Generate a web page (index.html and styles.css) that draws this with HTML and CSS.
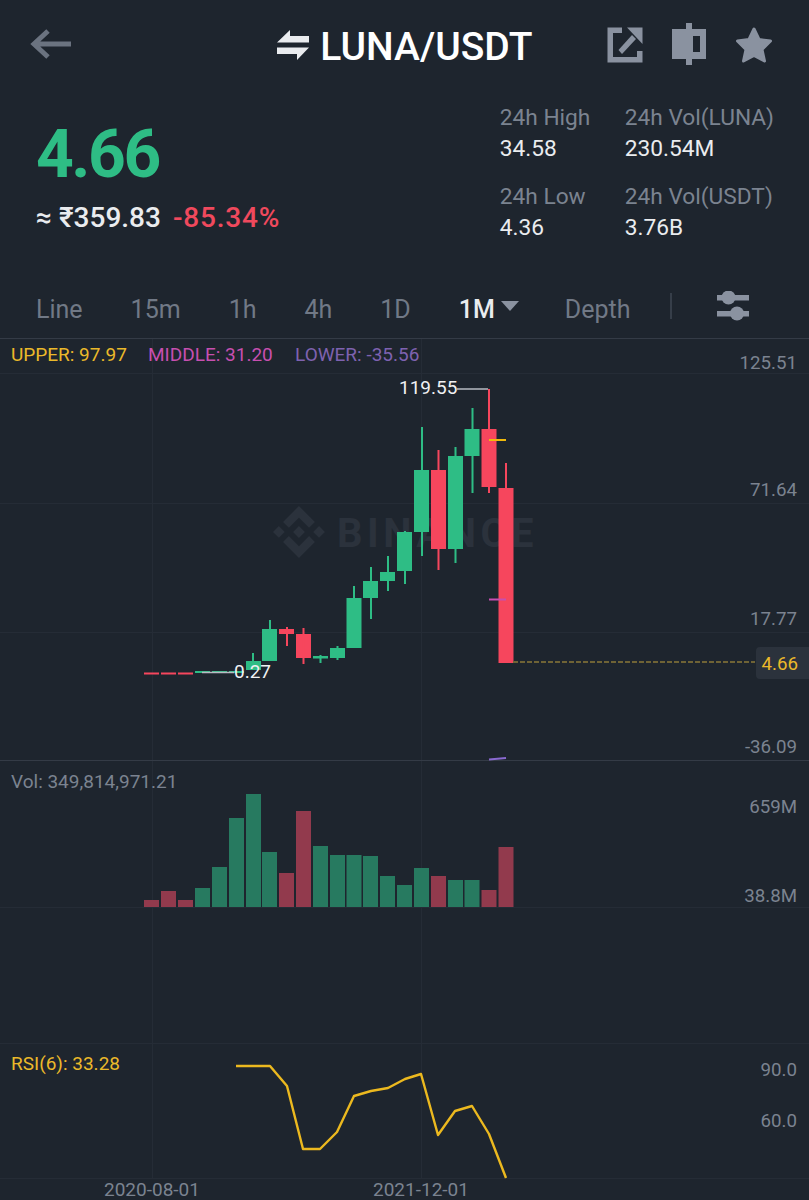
FILE: index.html
```html
<!DOCTYPE html>
<html lang="en">
<head>
  <meta charset="UTF-8">
  <meta name="viewport" content="width=device-width, initial-scale=1.0">
  <title>LUNA/USDT</title>
  <link rel="stylesheet" href="styles.css">
</head>
<body>
  <header class="topbar">
    <svg class="back-icon" viewBox="0 0 46 34" aria-hidden="true">
      <path d="M18 4 L4 17 L18 30 M4 17 H41"/>
    </svg>
    <div class="title">
      <svg class="swap-icon" viewBox="0 0 34 32" aria-hidden="true">
        <path d="M1 13.500 L14 1 V7 H33 V13.500 Z M1 18.500 H33 L21 31 V25 H1 Z"/>
      </svg>
      <span>LUNA/USDT</span>
    </div>
    <div class="actions">
      <svg viewBox="0 0 36 36" width="36" height="36" aria-hidden="true">
        <path d="M0.500 0.500 H15 V6 H6 V30 H30 V24 H35.500 V35.500 H0.500 Z"/>
        <path d="M20 0.500 H35.500 V17 Z"/>
        <path d="M11.500 23 L25 8 L29 12 L15 27 Z"/>
      </svg>
      <svg viewBox="0 0 36 44" width="36" height="44" aria-hidden="true">
        <path fill-rule="evenodd" d="M15 0 H21 V6 H35 V36 H21 V42 H15 V36 H1 V6 H15 Z M22 13 V29 H29 V13 Z"/>
      </svg>
      <svg viewBox="0 0 38 38" width="38" height="38" aria-hidden="true">
        <path class="star" d="M19 3 L24 13.500 L35.500 15 L27 23.500 L29.500 35 L19 29.500 L8.500 35 L11 23.500 L2.500 15 L14 13.500 Z"/>
      </svg>
    </div>
  </header>

  <section class="summary">
    <div class="price-block">
      <div class="last-price">4.66</div>
      <div class="price-sub">
        <span>≈ ₹359.83</span>
        <span class="change">-85.34%</span>
      </div>
    </div>
    <div class="stats">
      <div class="stat"><span>24h High</span><strong>34.58</strong></div>
      <div class="stat"><span>24h Vol(LUNA)</span><strong>230.54M</strong></div>
      <div class="stat"><span>24h Low</span><strong>4.36</strong></div>
      <div class="stat"><span>24h Vol(USDT)</span><strong>3.76B</strong></div>
    </div>
  </section>

  <nav class="tabs">
    <a>Line</a>
    <a>15m</a>
    <a>1h</a>
    <a>4h</a>
    <a>1D</a>
    <a class="active">1M<i class="caret"></i></a>
    <a class="depth">Depth</a>
    <span class="tab-sep"></span>
    <svg class="sliders" viewBox="0 0 34 30" aria-hidden="true">
      <path d="M0 4 H32 V9.500 H0 Z M0 20 H32 V25.500 H0 Z"/>
      <circle cx="11.500" cy="6.500" r="7"/>
      <circle cx="20" cy="22.500" r="7"/>
    </svg>
  </nav>

  <svg class="chart" viewBox="0 338 809 862" width="809" height="862" aria-label="Candlestick chart">
    <!-- grid -->
    <path class="grid" d="M0 373.500 H809 M0 503.500 H809 M0 632.500 H809 M0 907.500 H809 M0 1043.500 H809 M0 1178.500 H809 M152.500 338 V1178 M421.500 338 V1178"/>
    <path class="divider" d="M0 338.500 H809 M0 760.500 H809"/>

    <!-- watermark -->
    <g class="watermark" transform="translate(273 506) scale(0.41)">
      <path d="M38.73 53.2l24.59-24.58 24.6 24.6 14.3-14.31L63.32 0 24.43 38.9l14.3 14.3z"/>
      <path d="M0 63.31l14.3-14.31 14.31 14.31-14.31 14.3z"/>
      <path d="M38.73 73.41l24.59 24.59 24.6-24.6 14.31 14.29-38.9 38.91-38.91-38.88v-.03l14.31-14.29z"/>
      <path d="M98 63.31l14.3-14.31 14.31 14.3-14.31 14.32z"/>
      <path d="M77.83 63.3L63.32 48.78 52.59 59.51l-1.24 1.23-2.54 2.54 14.51 14.5 14.51-14.51z"/>
    </g>
    <text class="watermark-text" x="337" y="547">BINANCE</text>

    <!-- candles -->
    <g class="down">
      <rect x="144" y="672.500" width="15" height="2"/>
      <rect x="161" y="672.500" width="15" height="2"/>
      <rect x="178" y="672.500" width="15" height="2"/>
      <rect x="279" y="629" width="15" height="5"/><rect x="286" y="627" width="2" height="19"/>
      <rect x="296" y="634" width="15" height="24"/><rect x="302.500" y="628" width="2" height="36"/>
      <rect x="431" y="470" width="15" height="79"/><rect x="437.500" y="450" width="2" height="120"/>
      <rect x="481.500" y="429" width="15" height="58"/><rect x="488" y="389" width="2" height="104"/>
      <rect x="498.500" y="488" width="15" height="175"/><rect x="505" y="463" width="2" height="26"/>
    </g>
    <g class="up">
      <rect x="195" y="671" width="15" height="2"/>
      <rect x="212" y="671" width="15" height="2"/>
      <rect x="229" y="671" width="15" height="2"/>
      <rect x="246" y="661" width="15" height="9"/><rect x="252" y="653" width="2" height="9"/>
      <rect x="262" y="629" width="15" height="32"/><rect x="269" y="620" width="2" height="10"/>
      <rect x="313" y="656" width="15" height="2.500"/><rect x="319.500" y="655" width="2" height="8"/>
      <rect x="330" y="648" width="15" height="10"/><rect x="336.500" y="646" width="2" height="14"/>
      <rect x="346.500" y="598" width="15" height="50"/><rect x="353" y="586" width="2" height="13"/>
      <rect x="363" y="581" width="15" height="17"/><rect x="370" y="567" width="2" height="52"/>
      <rect x="380" y="572" width="15" height="9"/><rect x="387" y="556" width="2" height="35"/>
      <rect x="397" y="532" width="15" height="39"/><rect x="404" y="531" width="2" height="53"/>
      <rect x="414" y="470" width="15" height="62"/><rect x="421" y="427" width="2" height="129"/>
      <rect x="448" y="456" width="15" height="93"/><rect x="454.500" y="447" width="2" height="116"/>
      <rect x="464.500" y="429" width="15" height="27"/><rect x="471.500" y="408" width="2" height="85"/>
    </g>

    <!-- band markers and price line -->
    <path class="tick-upper" d="M489 440 H506"/>
    <path class="tick-middle" d="M489 599.500 H506"/>
    <path class="tick-lower" d="M489 759.500 L506 758"/>
    <path class="price-line" d="M513 662 H755"/>
    <path class="leader" d="M457 389 H488 M202 672.500 H234"/>
    <rect class="price-tag" x="756" y="647" width="60" height="32" rx="4"/>

    <!-- volume -->
    <g class="vol-down">
      <rect x="144" y="900" width="15" height="7"/>
      <rect x="161" y="891" width="15" height="16"/>
      <rect x="178" y="900" width="15" height="7"/>
      <rect x="279" y="873" width="15" height="34"/>
      <rect x="296" y="811" width="15" height="96"/>
      <rect x="431" y="876" width="15" height="31"/>
      <rect x="481.500" y="890" width="15" height="17"/>
      <rect x="498.500" y="847" width="15" height="60"/>
    </g>
    <g class="vol-up">
      <rect x="195" y="888" width="15" height="19"/>
      <rect x="212" y="867" width="15" height="40"/>
      <rect x="229" y="818" width="15" height="89"/>
      <rect x="246" y="794" width="15" height="113"/>
      <rect x="262" y="852" width="15" height="55"/>
      <rect x="313" y="846" width="15" height="61"/>
      <rect x="330" y="855" width="15" height="52"/>
      <rect x="346.500" y="855" width="15" height="52"/>
      <rect x="363" y="856" width="15" height="51"/>
      <rect x="380" y="876" width="15" height="31"/>
      <rect x="397" y="885" width="15" height="22"/>
      <rect x="414" y="868" width="15" height="39"/>
      <rect x="448" y="880" width="15" height="27"/>
      <rect x="464.500" y="880" width="15" height="27"/>
    </g>

    <!-- rsi -->
    <polyline class="rsi" points="236,1066 270,1066 287,1086 303,1149 320,1149 337,1132 354,1096 371,1091 388,1088 405,1079 421,1074 438,1135 455,1111 472,1106 489,1134 506,1178"/>

    <!-- legends -->
    <text class="label upper" x="11" y="361">UPPER: 97.97</text>
    <text class="label middle" x="148" y="361">MIDDLE: 31.20</text>
    <text class="label lower" x="295" y="361">LOWER: -35.56</text>
    <text class="label muted" x="11" y="788">Vol: 349,814,971.21</text>
    <text class="label upper" x="11" y="1070">RSI(6): 33.28</text>
    <text class="label light" x="399" y="394">119.55</text>
    <text class="label light" x="234" y="678">0.27</text>

    <!-- axis -->
    <g class="axis">
      <text x="797" y="369">125.51</text>
      <text x="797" y="496">71.64</text>
      <text x="797" y="625">17.77</text>
      <text class="upper" x="798" y="670">4.66</text>
      <text x="797" y="753">-36.09</text>
      <text x="797" y="813">659M</text>
      <text x="797" y="902">38.8M</text>
      <text x="797" y="1076">90.0</text>
      <text x="797" y="1127">60.0</text>
    </g>
    <text class="label muted" x="104" y="1196">2020-08-01</text>
    <text class="label muted" x="373" y="1196">2021-12-01</text>
  </svg>
</body>
</html>
```

FILE: styles.css
```css
* {
  margin: 0;
  padding: 0;
  box-sizing: border-box;
}

body {
  width: 809px;
  height: 1200px;
  overflow: hidden;
  font-family: Roboto, sans-serif;
  background: #1e252e;
  color: #eaecef;
}

.topbar {
  display: grid;
  grid-template-columns: 1fr auto 1fr;
  align-items: center;
  height: 90px;
  padding: 0 36px 0 30px;
}

.back-icon {
  width: 46px;
  height: 34px;
  margin-top: -2px;
  fill: none;
  stroke: #6b7380;
  stroke-width: 5;
}

.title {
  display: flex;
  align-items: center;
  gap: 10px;
  margin-left: 6px;
  font-size: 39px;
  font-weight: 500;
  color: #fff;
}

.title span {
  margin-top: 3px;
}

.swap-icon {
  width: 34px;
  height: 32px;
  fill: #eaecef;
}

.actions {
  display: flex;
  justify-content: flex-end;
  align-items: center;
  gap: 28px;
}

.actions svg {
  fill: #8a92a0;
}

.star {
  stroke: #8a92a0;
  stroke-width: 3;
  stroke-linejoin: round;
}

.summary {
  display: flex;
  justify-content: space-between;
  height: 180px;
  padding: 0 35px 0 36px;
}

.last-price {
  margin-top: 27px;
  font-size: 66px;
  line-height: 76px;
  font-weight: 700;
  letter-spacing: -2.500px;
  color: #2ebd85;
}

.price-sub {
  display: flex;
  gap: 12px;
  margin-top: 9px;
  font-size: 28px;
  line-height: 32px;
  font-weight: 500;
}

.change {
  letter-spacing: 0.8px;
  color: #f0495d;
}

.stats {
  display: grid;
  grid-template-columns: 125px auto;
  grid-auto-rows: 79px;
  padding-top: 12px;
}

.stat span,
.stat strong {
  display: block;
  font-size: 22.700px;
  line-height: 31px;
  font-weight: 400;
}

.stat span {
  color: #7b8390;
}

.tabs {
  display: flex;
  align-items: center;
  gap: 48px;
  height: 68px;
  padding: 10px 0 0 36px;
  font-size: 25px;
  color: #717986;
}

.tabs .active {
  display: flex;
  align-items: center;
  gap: 6px;
  font-weight: 500;
  color: #eaecef;
}

.caret {
  width: 0;
  height: 0;
  margin-top: -6px;
  border-left: 9px solid transparent;
  border-right: 9px solid transparent;
  border-top: 10px solid #8a92a0;
}

.tabs .depth {
  margin-left: -2px;
}

.tab-sep {
  width: 2px;
  height: 26px;
  margin: -6px 0 0 -9px;
  background: #363e49;
}

.sliders {
  width: 34px;
  height: 30px;
  margin: -6px 0 0 -3px;
  fill: #8a92a0;
}

.chart {
  display: block;
}

.grid {
  fill: none;
  stroke: #252c36;
  stroke-width: 1;
}

.divider {
  fill: none;
  stroke: #343b46;
  stroke-width: 1;
}

.watermark {
  fill: #2b323c;
}

.watermark-text {
  font-size: 40px;
  font-weight: 700;
  letter-spacing: 4.5px;
  fill: #2b323c;
}

.up {
  fill: #2ebd85;
}

.down {
  fill: #f6465d;
}

.vol-up {
  fill: #277a60;
}

.vol-down {
  fill: #923a4d;
}

.tick-upper,
.tick-middle,
.tick-lower {
  fill: none;
  stroke-width: 2;
}

.tick-upper {
  stroke: #f0b90b;
}

.tick-middle {
  stroke: #c74fb0;
}

.tick-lower {
  stroke: #8a6ad0;
}

.price-line {
  fill: none;
  stroke: #6f6335;
  stroke-width: 2;
  stroke-dasharray: 5 2;
}

.leader {
  fill: none;
  stroke: #b7bbc2;
  stroke-width: 1.500;
}

.price-tag {
  fill: #2b323c;
}

.rsi {
  fill: none;
  stroke: #ecb91f;
  stroke-width: 2.400;
  stroke-linejoin: round;
}

.label {
  font-size: 19px;
}

.axis text {
  font-size: 18.700px;
  text-anchor: end;
  fill: #7b8390;
}

.label.upper,
.axis .upper {
  fill: #ebb92a;
}

.middle {
  fill: #c74fb0;
}

.lower {
  fill: #7e62b0;
}

.muted {
  fill: #7b8390;
}

.light {
  fill: #f0f1f3;
}
```
